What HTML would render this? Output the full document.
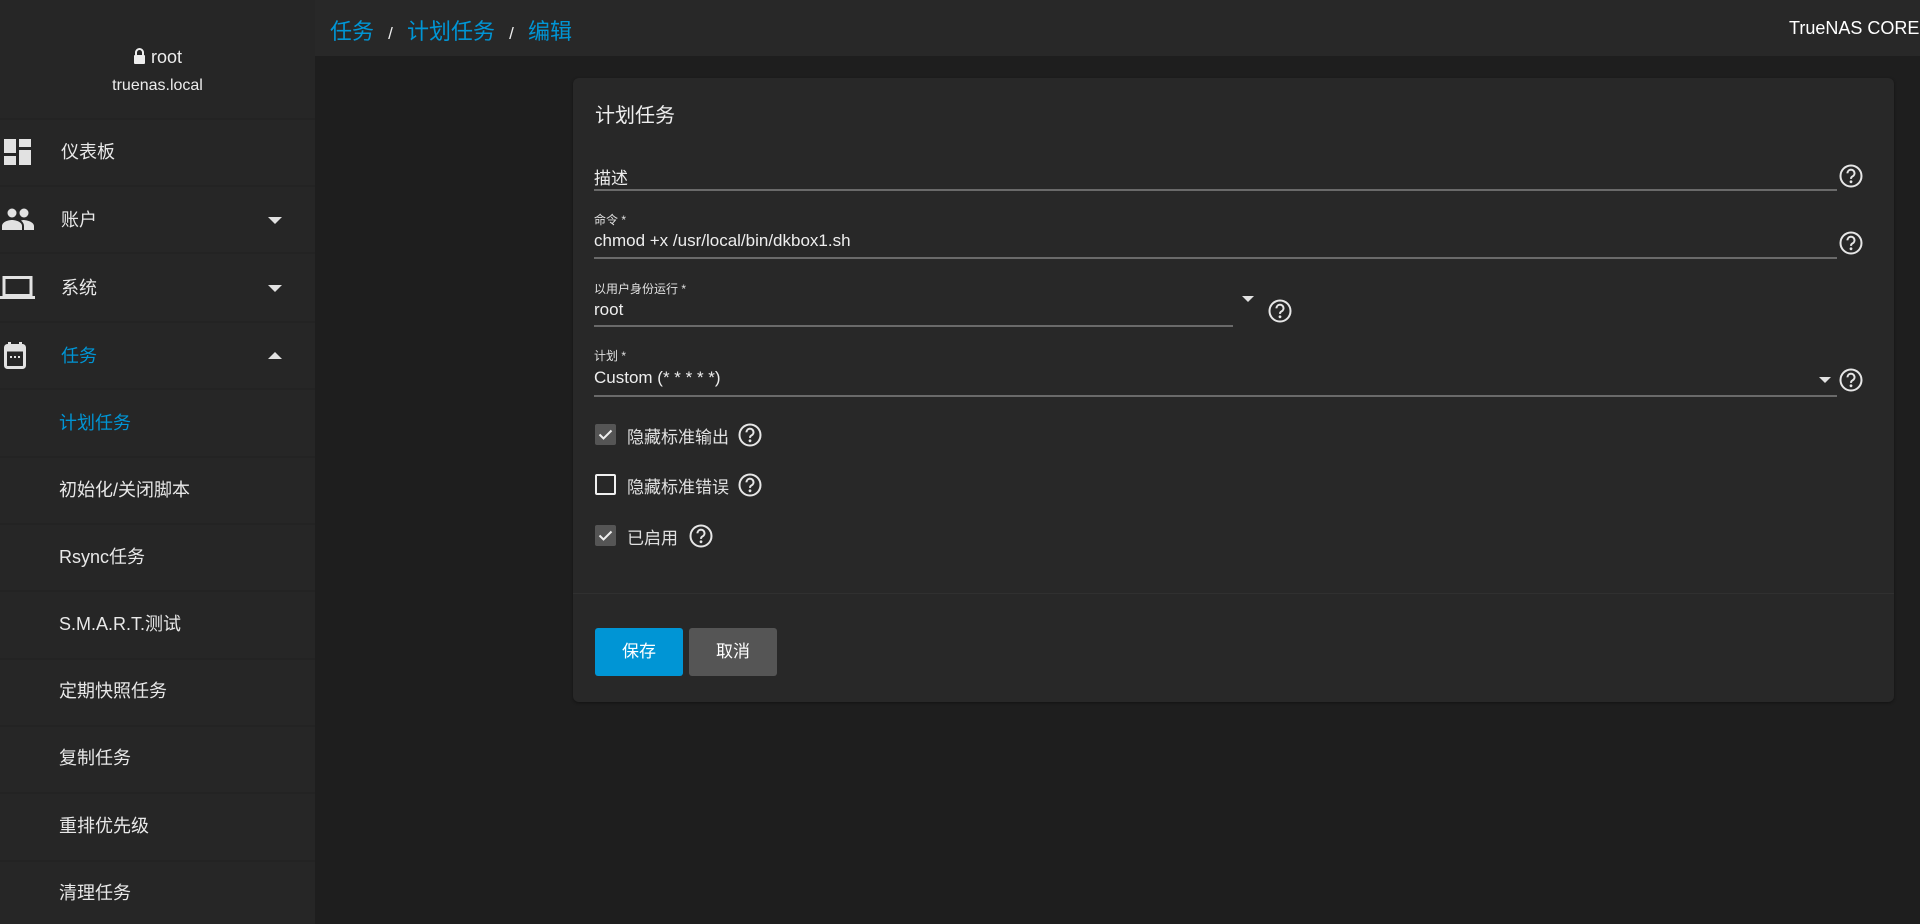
<!DOCTYPE html>
<html><head><meta charset="utf-8"><style>
*{box-sizing:border-box;margin:0;padding:0}
body{width:1920px;height:924px;overflow:hidden;background:#1e1e1e;font-family:"Liberation Sans","Noto Sans CJK SC",sans-serif;color:#e6e6e6;position:relative}
.abs{position:absolute}
#side{left:0;top:0;width:315px;height:924px;background:#262626}
.sep{position:absolute;left:0;width:315px;height:2px;background:#232323}
.item{position:absolute;left:0;width:315px;font-size:18px;color:#e8e8e8;line-height:20px}
.item .t{position:absolute;left:61px;top:-10px}
.sub .t{left:59px}
.arrow{position:absolute;left:268px;width:0;height:0;border-left:7px solid transparent;border-right:7px solid transparent}
#top{left:315px;top:0;width:1605px;height:56px;background:#282828}
#card{left:573px;top:78px;width:1321px;height:624px;background:#282828;border-radius:6px;box-shadow:0 1px 3px rgba(0,0,0,.4)}
.lbl{position:absolute;left:21px;font-size:12px;color:#e0e0e0}
.val{position:absolute;left:21px;font-size:17px;color:#eee}
.ul{position:absolute;left:21px;height:2px;background:#6a6a6a}
.help{position:absolute;width:24px;height:24px}
.cb{position:absolute;left:22px;width:21px;height:21px;border-radius:2px}
.cbl{position:absolute;left:54px;font-size:17px;color:#e0e0e0}
</style></head><body>
<div id="side" class="abs">
  <div class="abs" style="left:0;width:315px;top:47px;text-align:center;font-size:18px;color:#ececec">
    <svg width="13" height="16" viewBox="0 0 13 16" style="vertical-align:-1px"><path d="M3 7V4.5a3.5 3.5 0 0 1 7 0V7" stroke="#eee" stroke-width="2" fill="none"/><rect x="1" y="7" width="11" height="9" rx="1" fill="#eee"/></svg> root</div>
  <div class="abs" style="left:0;width:315px;top:77px;text-align:center;font-size:16px;color:#ececec">truenas.local</div>
  <div class="sep" style="top:118px"></div>
  <div class="sep" style="top:185px"></div>
  <div class="sep" style="top:252px"></div>
  <div class="sep" style="top:321px"></div>
  <div class="sep" style="top:388px"></div>
  <div class="sep" style="top:456px"></div>
  <div class="sep" style="top:523px"></div>
  <div class="sep" style="top:590px"></div>
  <div class="sep" style="top:658px"></div>
  <div class="sep" style="top:725px"></div>
  <div class="sep" style="top:792px"></div>
  <div class="sep" style="top:860px"></div>
  <svg class="abs" style="left:4px;top:139px" width="27" height="26" viewBox="0 0 27 26"><rect x="0" y="0" width="12" height="14" fill="#e2e2e2"/><rect x="15" y="0" width="12" height="8" fill="#e2e2e2"/><rect x="0" y="17" width="12" height="9" fill="#e2e2e2"/><rect x="15" y="11" width="12" height="15" fill="#e2e2e2"/></svg>
  <svg class="abs" style="left:2px;top:208px" width="32" height="22" viewBox="0 0 32 22"><circle cx="10" cy="5" r="4.5" fill="#e2e2e2"/><circle cx="22" cy="5" r="4.5" fill="#e2e2e2"/><path d="M0 22v-4c0-4 6-6 10-6s10 2 10 6v4z" fill="#e2e2e2"/><path d="M21 12c4 0 11 2 11 6v4h-10v-4c0-2-1-4-3-5.5z" fill="#e2e2e2"/></svg>
  <svg class="abs" style="left:0px;top:276px" width="36" height="24" viewBox="0 0 36 24"><rect x="4" y="1.5" width="27" height="18" fill="none" stroke="#e2e2e2" stroke-width="3"/><rect x="0" y="20" width="35" height="3" fill="#e2e2e2"/></svg>
  <svg class="abs" style="left:4px;top:342px" width="22" height="28" viewBox="0 0 22 28"><rect x="4" y="0" width="3" height="5" fill="#e2e2e2"/><rect x="15" y="0" width="3" height="5" fill="#e2e2e2"/><rect x="1.5" y="3.5" width="19" height="22" rx="2" fill="none" stroke="#e2e2e2" stroke-width="3"/><rect x="1.5" y="3.5" width="19" height="6" fill="#e2e2e2"/><rect x="6" y="14" width="2" height="2" fill="#e2e2e2"/><rect x="10" y="14" width="2" height="2" fill="#e2e2e2"/><rect x="14" y="14" width="2" height="2" fill="#e2e2e2"/></svg>
  <div class="item" style="top:152px"><span class="t">仪表板</span></div>
  <div class="item" style="top:220px"><span class="t">账户</span><div class="arrow" style="top:-3px;border-top:7px solid #e2e2e2"></div></div>
  <div class="item" style="top:288px"><span class="t">系统</span><div class="arrow" style="top:-3px;border-top:7px solid #e2e2e2"></div></div>
  <div class="item" style="top:356px"><span class="t" style="color:#0095d5">任务</span><div class="arrow" style="top:-4px;border-bottom:7px solid #e2e2e2"></div></div>
  <div class="item sub" style="top:423px"><span class="t" style="color:#0095d5">计划任务</span></div>
  <div class="item sub" style="top:490px"><span class="t">初始化/关闭脚本</span></div>
  <div class="item sub" style="top:557px"><span class="t">Rsync任务</span></div>
  <div class="item sub" style="top:624px"><span class="t">S.M.A.R.T.测试</span></div>
  <div class="item sub" style="top:691px"><span class="t">定期快照任务</span></div>
  <div class="item sub" style="top:758px"><span class="t">复制任务</span></div>
  <div class="item sub" style="top:826px"><span class="t">重排优先级</span></div>
  <div class="item sub" style="top:893px"><span class="t">清理任务</span></div>
</div>
<div id="top" class="abs">
  <div class="abs" style="left:15px;top:14px;font-size:22px;color:#0095d5;white-space:nowrap">任务 <span style="color:#eee;font-size:17px;margin:0 8px">/</span> 计划任务 <span style="color:#eee;font-size:17px;margin:0 8px">/</span> 编辑</div>
  <div class="abs" style="left:1474px;top:18px;font-size:18px;color:#fff;white-space:nowrap">TrueNAS CORE</div>
</div>
<div id="card" class="abs">
  <div class="abs" style="left:22px;top:21px;font-size:20px;color:#eee">计划任务</div>
  <div class="val" style="top:86px">描述</div>
  <div class="ul" style="top:111px;width:1243px"></div>
  <div class="lbl" style="top:133px">命令 *</div>
  <div class="val" style="top:153px">chmod +x /usr/local/bin/dkbox1.sh</div>
  <div class="ul" style="top:179px;width:1243px"></div>
  <div class="lbl" style="top:202px">以用户身份运行 *</div>
  <div class="val" style="top:222px">root</div>
  <div class="ul" style="top:247px;width:639px"></div>
  <div class="abs" style="left:669px;top:218px;border-left:6px solid transparent;border-right:6px solid transparent;border-top:6px solid #e2e2e2"></div>
  <div class="lbl" style="top:269px">计划 *</div>
  <div class="val" style="top:290px">Custom (* * * * *)</div>
  <div class="ul" style="top:317px;width:1243px"></div>
  <div class="abs" style="left:1246px;top:299px;border-left:6px solid transparent;border-right:6px solid transparent;border-top:6px solid #e2e2e2"></div>
  <div class="cb" style="top:346px;background:#555"><svg width="21" height="21" viewBox="0 0 21 21"><path d="M4.5 10.5l4 4 8-8" stroke="#eee" stroke-width="2" fill="none"/></svg></div>
  <div class="cbl" style="top:345px">隐藏标准输出</div>
  <div class="cb" style="top:396px;border:2px solid #f0f0f0"></div>
  <div class="cbl" style="top:395px">隐藏标准错误</div>
  <div class="cb" style="top:447px;background:#555"><svg width="21" height="21" viewBox="0 0 21 21"><path d="M4.5 10.5l4 4 8-8" stroke="#eee" stroke-width="2" fill="none"/></svg></div>
  <div class="cbl" style="top:446px">已启用</div>
  <div class="abs" style="left:0;top:515px;width:1321px;height:1px;background:#303030"></div>
  <div class="abs" style="left:22px;top:550px;width:88px;height:48px;background:#0095d5;border-radius:3px;color:#fff;font-size:17px;text-align:center;line-height:48px">保存</div>
  <div class="abs" style="left:116px;top:550px;width:88px;height:48px;background:#555;border-radius:3px;color:#fff;font-size:17px;text-align:center;line-height:48px">取消</div>
</div>
<svg width="0" height="0" style="position:absolute"><defs><g id="q"><circle cx="12" cy="12" r="10.5" fill="none" stroke="#e6e6e6" stroke-width="2"/><path d="M8.5 9.3a3.5 3.5 0 1 1 5 3.1c-1.1.5-1.5 1.2-1.5 2.5" fill="none" stroke="#e6e6e6" stroke-width="2"/><circle cx="12" cy="17.8" r="1.4" fill="#e6e6e6"/></g></defs></svg>
<svg class="help" style="left:1839px;top:164px"><use href="#q"/></svg>
<svg class="help" style="left:1839px;top:231px"><use href="#q"/></svg>
<svg class="help" style="left:1268px;top:299px"><use href="#q"/></svg>
<svg class="help" style="left:1839px;top:368px"><use href="#q"/></svg>
<svg class="help" style="left:738px;top:423px"><use href="#q"/></svg>
<svg class="help" style="left:738px;top:473px"><use href="#q"/></svg>
<svg class="help" style="left:689px;top:524px"><use href="#q"/></svg>
</body></html>
